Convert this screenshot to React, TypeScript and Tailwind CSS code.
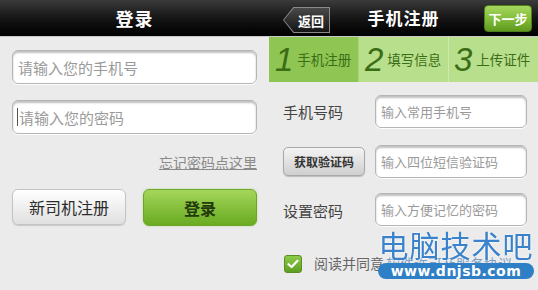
import React from "react";

const font = { fontFamily: '"Noto Sans CJK SC", "Noto Sans", sans-serif' };

function Header({ children }: { children: React.ReactNode }) {
  return (
    <div className="relative h-[37px] flex items-center justify-center bg-gradient-to-b from-[#3b3b3b] via-[#161616] to-[#020202] border-b border-[#c9c9c9]">
      {children}
    </div>
  );
}

function Input({ placeholder, cursor, className }: { placeholder: string; cursor?: boolean; className: string }) {
  return (
    <div
      className={
        "flex items-center bg-white border border-[#b5b5b5] rounded-[6px] shadow-[inset_0_2px_2px_rgba(0,0,0,0.25),0_1px_0_rgba(255,255,255,0.9)] " +
        className
      }
    >
      {cursor && <span className="w-[1px] h-[18px] bg-[#555] mr-[1px]" />}
      <span className="text-[#9a9a9a] leading-none whitespace-nowrap">{placeholder}</span>
    </div>
  );
}

export default function App() {
  return (
    <div className="w-[538px] h-[290px] flex overflow-hidden bg-[#1a1a1a]" style={font}>
      {/* Left: login */}
      <div className="w-[269px] h-full flex flex-col bg-[#ebebeb]">
        <Header>
          <span className="text-white text-[18px] font-bold tracking-[1px]">登录</span>
        </Header>
        <div className="flex flex-col px-[12px] pt-[13px]">
          <Input placeholder="请输入您的手机号" className="h-[34px] w-[245px] pl-[5px] text-[15px]" />
          <Input placeholder="请输入您的密码" cursor className="h-[34px] w-[245px] pl-[4px] mt-[16px] text-[15px]" />
          <div className="flex justify-end w-[245px] mt-[21px]">
            <span className="text-[14px] text-[#8a8a8a] underline leading-none">忘记密码点这里</span>
          </div>
          <div className="flex justify-between w-[245px] mt-[20px]">
            <div className="w-[114px] h-[36px] rounded-[6px] border border-[#c4c4c4] bg-gradient-to-b from-[#ffffff] to-[#e0e0e0] flex items-center justify-center shadow-[0_1px_1px_rgba(0,0,0,0.15)]">
              <span className="text-[16px] text-[#2c2c2c]">新司机注册</span>
            </div>
            <div className="w-[114px] h-[37px] rounded-[6px] border border-[#6fa72c] bg-gradient-to-b from-[#a5d65c] via-[#86c03c] to-[#6aab22] flex items-center justify-center shadow-[0_0_2px_rgba(140,200,60,0.6)]">
              <span className="text-[16px] text-[#233a0c] font-bold">登录</span>
            </div>
          </div>
        </div>
      </div>

      {/* Right: register */}
      <div className="relative w-[269px] h-full flex flex-col bg-[#ebebeb] overflow-hidden">
        <Header>
          <div className="absolute left-[14px] top-[7px] w-[47px] h-[26px] bg-[#8a8a8a] [clip-path:polygon(22%_0,100%_0,100%_100%,22%_100%,0_50%)]">
            <div className="absolute inset-[1px] bg-gradient-to-b from-[#4a4a4a] to-[#151515] [clip-path:polygon(22%_0,100%_0,100%_100%,22%_100%,0_50%)] flex items-center justify-end pr-[5px]">
              <span className="text-white text-[13px] font-bold leading-none">返回</span>
            </div>
          </div>
          <span className="text-white text-[17px] font-bold tracking-[1px]">手机注册</span>
          <div className="absolute right-[6px] top-[5px] w-[48px] h-[27px] rounded-[4px] border border-[#4f7f1a] bg-gradient-to-b from-[#a6d65e] via-[#84bd3a] to-[#5f9a1c] flex items-center justify-center">
            <span className="text-white text-[13px] font-bold leading-none">下一步</span>
          </div>
        </Header>
        <div className="h-[45px] flex text-[#3b6d16]">
          <div className="w-[90px] flex items-center pl-[6px] bg-[#8ec553] border-r border-[#a9d47a]">
            <span className="text-[33px] italic font-light leading-none mr-[4px]" style={{ fontFamily: '"Liberation Sans", sans-serif' }}>1</span>
            <span className="text-[13.5px] whitespace-nowrap">手机注册</span>
          </div>
          <div className="w-[90px] flex items-center pl-[6px] bg-[#b8df8c] border-r border-[#cde9ad]">
            <span className="text-[33px] italic font-light leading-none mr-[4px]" style={{ fontFamily: '"Liberation Sans", sans-serif' }}>2</span>
            <span className="text-[13.5px] whitespace-nowrap">填写信息</span>
          </div>
          <div className="flex-1 flex items-center pl-[5px] bg-[#b8df8c]">
            <span className="text-[33px] italic font-light leading-none mr-[4px]" style={{ fontFamily: '"Liberation Sans", sans-serif' }}>3</span>
            <span className="text-[13.5px] whitespace-nowrap">上传证件</span>
          </div>
        </div>
        <div className="grid grid-cols-[92px_152px] pl-[14px] pt-[13px]">
          <div className="flex items-center h-[33px]">
            <span className="text-[15px] text-[#444] pt-[2px]">手机号码</span>
          </div>
          <Input placeholder="输入常用手机号" className="h-[33px] pl-[5px] text-[13px]" />
          <div className="flex items-center h-[33px] mt-[17px]">
            <div className="w-[82px] h-[29px] rounded-[5px] border border-[#a9a9a9] bg-gradient-to-b from-[#f4f4f4] to-[#cfcfcf] flex items-center justify-center shadow-[0_1px_1px_rgba(0,0,0,0.2)]">
              <span className="text-[12px] font-bold text-[#333]">获取验证码</span>
            </div>
          </div>
          <Input placeholder="输入四位短信验证码" className="h-[33px] mt-[17px] pl-[5px] text-[13px]" />
          <div className="flex items-center h-[33px] mt-[15px]">
            <span className="text-[15px] text-[#444] pt-[4px]">设置密码</span>
          </div>
          <Input placeholder="输入方便记忆的密码" className="h-[33px] mt-[15px] pl-[5px] text-[13px]" />
        </div>
        <div className="flex items-center pl-[15px] mt-[27px] whitespace-nowrap">
          <div className="shrink-0 w-[18px] h-[18px] rounded-[3px] bg-gradient-to-b from-[#8ccb47] to-[#5e9e22] border border-[#5a8d25] flex items-center justify-center">
            <svg width="12" height="10" viewBox="0 0 12 10">
              <path d="M1.5 5.2 L4.6 8 L10.5 1.8" stroke="white" strokeWidth="2.2" fill="none" strokeLinecap="round" strokeLinejoin="round" />
            </svg>
          </div>
          <span className="shrink-0 ml-[12px] text-[14px] text-[#666]">阅读并同意</span>
          <span className="shrink-0 ml-[2px] text-[14px] text-[#7d9fc4]">软件许可及服务协议</span>
        </div>

        {/* watermark */}
        <div className="absolute left-[107px] top-[229px] w-[160px] flex flex-col items-center">
          <span className="whitespace-nowrap text-[30px] leading-none text-[#3a82cc] tracking-[1px] drop-shadow-[0_0_1px_white]" style={{ fontFamily: '"Noto Sans CJK SC", sans-serif' }}>电脑技术吧</span>
          <div className="mt-[4px] w-[156px] h-[16px] rounded-full bg-[#2f7fc6] flex items-center justify-center">
            <span className="whitespace-nowrap text-white text-[14px] font-bold leading-none tracking-[0.5px]" style={{ fontFamily: '"DejaVu Sans", sans-serif' }}>www.dnjsb.com</span>
          </div>
        </div>
      </div>
    </div>
  );
}
